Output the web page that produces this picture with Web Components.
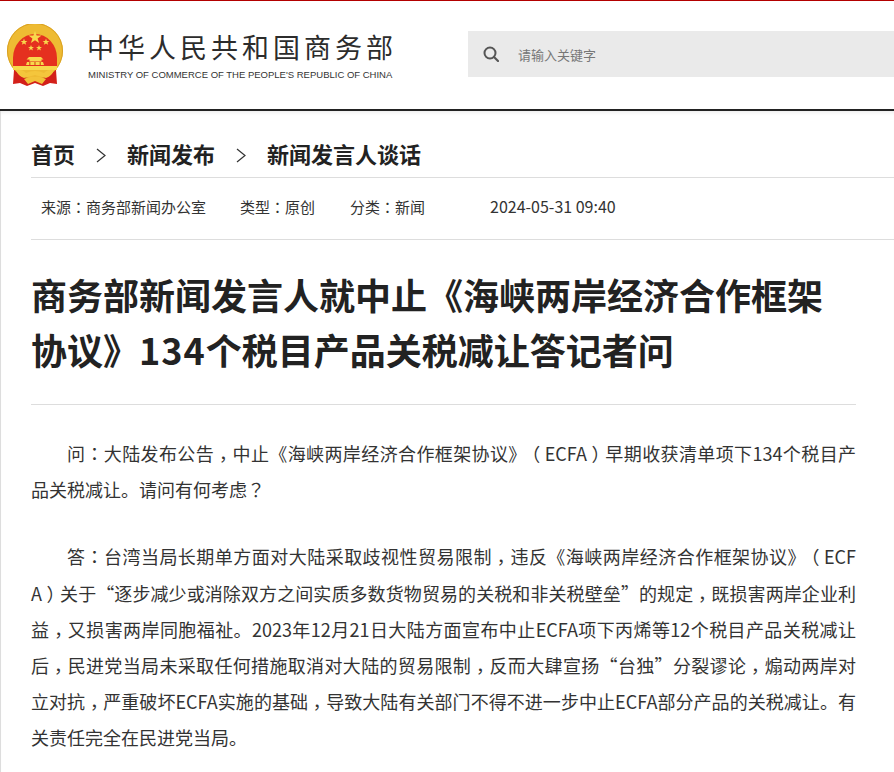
<!DOCTYPE html>
<html lang="zh-CN">
<head>
<meta charset="utf-8">
<title>商务部新闻发言人谈话</title>
<style>
  html, body { margin: 0; padding: 0; background: #fff; overflow: hidden; }
  body { width: 894px; height: 772px; font-family: "Noto Sans CJK SC", sans-serif; color: #222; }
</style>
</head>
<body>
<site-header></site-header>
<article-page>
  <bread-crumbs></bread-crumbs>
  <article-meta></article-meta>
  <article-body></article-body>
</article-page>

<script>
// the reference sets ，：？（） centred in their box, so each gets its own inline element.
const punct = s => s.split(/([，：？（）]|\|)/).map(t => {
    if (t === "" || t === "|") return "";
    if (t === "，") return `<i class="p c" lang="zh-TW">${t}</i>`;
    if (t === "：" || t === "？") return `<i class="p" lang="zh-TW">${t}</i>`;
    if (t === "（" || t === "）") return `<i class="pb">${t}</i>`;
    return `<i>${t}</i>`;
}).join("");
const PUNCT_CSS = `
  i { font-style:normal; }
  .p { font-family:"Noto Sans CJK TC", sans-serif; }
  .c { line-height:0; vertical-align:-5px; }
  .pb { display:inline-block; width:1em; line-height:1; text-indent:0; text-align:center; text-align-last:center; font-feature-settings:"halt"; }
`;

class SiteHeader extends HTMLElement {
    constructor() {
        super();
        this.attachShadow({ mode: "open" });
        this.shadowRoot.innerHTML = `
      <style>
        :host { display:flex; height:108px; border-top:1px solid #b30000; border-bottom:2px solid #222; align-items:flex-start; background:#fff; }
        .emblem { width:60px; height:64px; margin:23px 0 0 5px; flex:none; }
        .names { margin:31px 0 0 23px; width:340px; flex:none; }
        .cn { font:400 27px/34px "Noto Sans CJK SC", sans-serif; letter-spacing:4px; color:#2c2c2c; white-space:nowrap; margin-left:-1px; margin-top:-2px; }
        .en { font:400 9.5px/12px "Liberation Sans", sans-serif; color:#333; white-space:nowrap; margin-top:5px; }
        .search { flex:1; height:46px; margin:30px 0 0 40px; background:#eaeaea; display:flex; align-items:center; }
        .search svg { margin-left:15px; flex:none; }
        .search span { margin-left:19px; font:400 13px/1 "Noto Sans CJK SC", sans-serif; color:#777; }
      </style>
      <svg class="emblem" viewBox="5 24 60 64">
        <path d="M14 70 L13 84 L20 83 L27 86 L35 83 L43 86 L50 83 L57 84 L56 70 Z" fill="#d3201a"/>
        <circle cx="35" cy="51" r="28" fill="#eebb33"/>
        <circle cx="35" cy="51" r="27.500" fill="none" stroke="#d9a021" stroke-width="1"/>
        <path d="M13 58 A22 24 0 1 1 57 58 L57 66 L13 66 Z" fill="#e5301f"/>
        <g fill="#f8d84c">
          <polygon points="35,31 36.700,35.600 41.500,35.600 37.600,38.500 39.100,43 35,40.300 30.900,43 32.400,38.500 28.500,35.600 33.300,35.600"/>
          <polygon points="24,38.500 24.900,40.900 27.400,40.900 25.400,42.400 26.200,44.800 24,43.400 21.800,44.800 22.600,42.400 20.600,40.900 23.100,40.900"/>
          <polygon points="46,38.500 46.900,40.900 49.400,40.900 47.400,42.400 48.200,44.800 46,43.400 43.800,44.800 44.600,42.400 42.600,40.900 45.100,40.900"/>
          <polygon points="31,45 31.800,47 34,47 32.200,48.300 32.900,50.400 31,49.200 29.100,50.400 29.800,48.300 28,47 30.200,47"/>
          <polygon points="39,45 39.800,47 42,47 40.200,48.300 40.900,50.400 39,49.200 37.100,50.400 37.800,48.300 36,47 38.200,47"/>
          <path d="M29 57 h12 l2.500 2.500 h-2 v2 h-12 v-2 h-3 Z"/>
          <path d="M27 62 h16 l1 3 h-18 Z"/>
          <path d="M13 66 h44 v4 h-44 Z"/>
        </g>
        <path d="M29 62 h1.500 v3 h-1.500 Z M34.200 62 h1.500 v3 h-1.500 Z M39.500 62 h1.500 v3 h-1.500 Z" fill="#d9761c"/>
        <path d="M16 70 Q22 69 26 73 Q30 71 35 71 Q40 71 44 73 Q48 69 54 70 Q52 76 46 78 L35 75 L24 78 Q18 76 16 70 Z" fill="#f4c63c"/>
        <path d="M24 79 Q30 76 35 77 Q40 76 46 79 L42 84 L35 81 L28 84 Z" fill="#f2c23a"/>
      </svg>
      <div class="names">
        <div class="cn">中华人民共和国商务部</div>
        <div class="en">MINISTRY OF COMMERCE OF THE PEOPLE'S REPUBLIC OF CHINA</div>
      </div>
      <div class="search">
        <svg width="16" height="16" viewBox="0 0 16 16"><circle cx="7" cy="7" r="5.500" fill="none" stroke="#555" stroke-width="2"/><path d="M11 11l4 4" stroke="#555" stroke-width="2.200" stroke-linecap="round"/></svg>
        <span>请输入关键字</span>
      </div>
    `;
    }
}

class ArticlePage extends HTMLElement {
    constructor() {
        super();
        this.attachShadow({ mode: "open" });
        this.shadowRoot.innerHTML = `
      <style>
        :host { display:block; height:661px; border-left:1px solid #ddd; box-shadow:inset 0 4px 4px -3px #e8e8e8; padding-left:30px; overflow:hidden; }
      </style>
      <slot></slot>
    `;
    }
}

class BreadCrumbs extends HTMLElement {
    constructor() {
        super();
        this.attachShadow({ mode: "open" });
        const chevron = `<svg width="10" height="15" viewBox="0 0 10 15"><path d="M1 1 L9 7.500 L1 14" fill="none" stroke="#333" stroke-width="1.200"/></svg>`;
        this.shadowRoot.innerHTML = `
      <style>
        :host { display:flex; align-items:center; height:67px; border-bottom:1px solid #ddd; font:700 22px/1 "Noto Sans CJK SC", sans-serif; color:#222; padding-top:18px; box-sizing:border-box; }
        svg { margin:4px 21px 0; flex:none; }
      </style>
      <span>首页</span>
      ${chevron}
      <span>新闻发布</span>
      ${chevron}
      <span>新闻发言人谈话</span>
    `;
    }
}

class ArticleMeta extends HTMLElement {
    constructor() {
        super();
        this.attachShadow({ mode: "open" });
        this.shadowRoot.innerHTML = `
      <style>
        :host { display:flex; align-items:center; height:62px; border-bottom:1px solid #ddd; box-sizing:border-box; padding:0 0 5px 10px; font:400 15px/1 "Noto Sans CJK SC", sans-serif; color:#333; white-space:nowrap; text-spacing-trim:space-all; }
        ${PUNCT_CSS}
        span { flex:none; }
        span:nth-of-type(1) { width:199px; }
        span:nth-of-type(2) { width:110px; }
        span:nth-of-type(3) { width:140px; }
        span:nth-of-type(4) { font-size:16px; }
      </style>
      <span>${punct("来源：商务部新闻办公室")}</span>
      <span>${punct("类型：原创")}</span>
      <span>${punct("分类：新闻")}</span>
      <span>2024-05-31 09:40</span>
    `;
    }
}

class ArticleBody extends HTMLElement {
    constructor() {
        super();
        this.attachShadow({ mode: "open" });
        this.shadowRoot.innerHTML = `
      <style>
        :host { display:block; width:825px; text-spacing-trim:space-all; }
        ${PUNCT_CSS}
        h1 { margin:0; padding:27px 0 27px; font:700 36px/55px "Noto Sans CJK SC", sans-serif; color:#222; border-bottom:1px solid #ddd; }
        h1 b { font-weight:700; letter-spacing:1px; }
        p { margin:0 0 31px; font:400 18px/36.2px "Noto Sans CJK SC", sans-serif; color:#333; text-indent:36px; word-break:break-all; text-align:justify; }
        p.head { margin:0; text-align-last:justify; }
        p.tail { text-indent:0; }
        .text { padding-top:30px; }
      </style>
      <h1><i>商务部新闻发言人就中止《海峡两岸经济合作框架</i><i>协议》</i><b>134</b><i>个税目产品关税减让答记者问</i></h1>
      <div class="text">
        <p>${punct("问：大陆发布公告，中止《海峡两岸经济合作框架协议》（ECFA）早期收获清单项下134个税目产|品关税减让。请问有何考虑？")}</p>
        <p class="head">${punct("答：台湾当局长期单方面对大陆采取歧视性贸易限制，违反《海峡两岸经济合作框架协议》（ECF")}</p>
        <p class="tail">${punct("A）关于“逐步减少或消除双方之间实质多数货物贸易的关税和非关税壁垒”的规定，既损害两岸企业利|益，又损害两岸同胞福祉。2023年12月21日大陆方面宣布中止ECFA项下丙烯等12个税目产品关税减让|后，民进党当局未采取任何措施取消对大陆的贸易限制，反而大肆宣扬“台独”分裂谬论，煽动两岸对|立对抗，严重破坏ECFA实施的基础，导致大陆有关部门不得不进一步中止ECFA部分产品的关税减让。有|关责任完全在民进党当局。")}</p>
      </div>
    `;
    }
}

customElements.define("site-header", SiteHeader);
customElements.define("article-page", ArticlePage);
customElements.define("bread-crumbs", BreadCrumbs);
customElements.define("article-meta", ArticleMeta);
customElements.define("article-body", ArticleBody);
</script>
</body>
</html>
